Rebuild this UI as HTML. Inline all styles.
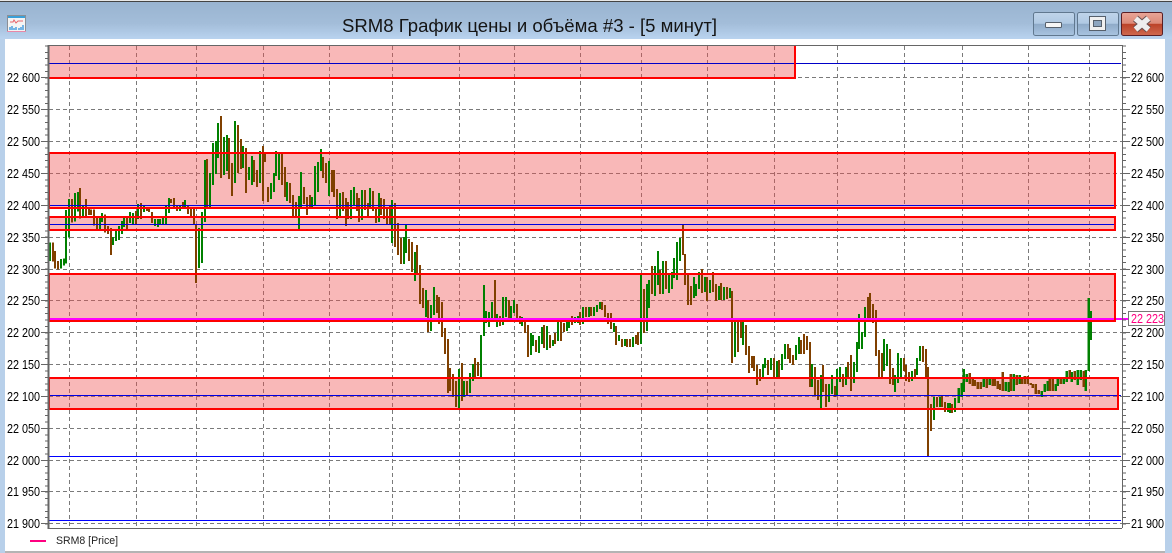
<!DOCTYPE html>
<html><head><meta charset="utf-8"><style>
html,body{margin:0;padding:0;width:1172px;height:553px;overflow:hidden;background:#b8d0ea}
svg{position:absolute;left:0;top:0;display:block}
text{font-family:"Liberation Sans",sans-serif}
</style></head><body>
<svg width="1172" height="553" viewBox="0 0 1172 553" xmlns="http://www.w3.org/2000/svg">
<defs>
<linearGradient id="tb" x1="0" y1="0" x2="0" y2="1"><stop offset="0" stop-color="#98b3d0"/><stop offset=".6" stop-color="#a3bdd9"/><stop offset="1" stop-color="#b9d3ef"/></linearGradient>
<linearGradient id="bb" x1="0" y1="0" x2="0" y2="1"><stop offset="0" stop-color="#bfd4ea"/><stop offset=".48" stop-color="#b0c9e3"/><stop offset=".5" stop-color="#8eaac8"/><stop offset="1" stop-color="#a9c4e0"/></linearGradient>
<linearGradient id="cb" x1="0" y1="0" x2="0" y2="1"><stop offset="0" stop-color="#e9a597"/><stop offset=".48" stop-color="#dc8a78"/><stop offset=".5" stop-color="#bb4228"/><stop offset="1" stop-color="#cf6a50"/></linearGradient>
</defs>
<rect width="1172" height="553" fill="#b8d0ea"/>
<rect width="1172" height="39" fill="url(#tb)"/>
<rect y="0" width="1172" height="1" fill="#e8e8e8"/>
<rect y="1" width="1172" height="1" fill="#444"/>
<rect x="5" y="39" width="1160" height="512" fill="#fff"/>
<rect x="5" y="551" width="1160" height="2" fill="#b4b4b4"/>

<!-- window icon -->
<rect x="7.5" y="15.5" width="18" height="16" fill="#f4f4f4" stroke="#8a8f96"/>
<rect x="8" y="16" width="17" height="2" fill="#3ba0d8"/>
<path d="M10 22h3l1-2 2 3 2-2h5" fill="none" stroke="#e8636a" stroke-width="1"/>
<path d="M10 30v-3M12 30v-4M14 30v-2M16 30v-3M19 30v-2M21 30v-3M23 30v-5" stroke="#4a9fe0" stroke-width="1.5" fill="none"/>
<rect x="7" y="31" width="19" height="1" fill="#e888a8"/>

<!-- title -->
<text x="342" y="32" font-size="18" fill="#141414" textLength="375" lengthAdjust="spacingAndGlyphs">SRM8 График цены и объёма #3 - [5 минут]</text>

<!-- buttons -->
<rect x="1033.5" y="12.5" width="41" height="23" rx="2" fill="url(#bb)" stroke="#60788f"/>
<rect x="1045.5" y="22.5" width="16" height="5" rx="1" fill="#f6f6f6" stroke="#56606c"/>
<rect x="1077.5" y="12.5" width="41" height="23" rx="2" fill="url(#bb)" stroke="#60788f"/>
<rect x="1089.5" y="16.5" width="16" height="14" fill="#f0f0f0" stroke="#56606c"/>
<rect x="1093.5" y="20.5" width="8" height="6" fill="#8ea6c0" stroke="#56606c"/>
<rect x="1121.5" y="12.5" width="41" height="23" rx="2" fill="url(#cb)" stroke="#5a1f25"/>
<path d="M1135.5 18.5l13 11M1148.5 18.5l-13 11" fill="none" stroke="#6a5050" stroke-width="7.5"/>
<path d="M1135.5 18.5l13 11M1148.5 18.5l-13 11" fill="none" stroke="#eeeeee" stroke-width="5.5"/>

<!-- grid -->
<g fill="none" stroke="#7a7a7a" stroke-width="1" stroke-dasharray="4 3" shape-rendering="crispEdges">
<path d="M49 77.5H1122M49 109.5H1122M49 141.5H1122M49 173.5H1122M49 205.5H1122M49 237.5H1122M49 269.5H1122M49 300.5H1122M49 332.5H1122M49 364.5H1122M49 396.5H1122M49 428.5H1122M49 460.5H1122M49 491.5H1122M49 523.5H1122"/>
<path d="M69.5 46V528M136.5 46V528M196.5 46V528M263.5 46V528M329.5 46V528M392.5 46V528M459.5 46V528M514.5 46V528M580.5 46V528M641.5 46V528M707.5 46V528M774.5 46V528M837.5 46V528M904.5 46V528M962.5 46V528M1028.5 46V528M1089.5 46V528"/>
</g>

<!-- zones fill -->
<g fill="#f04e4e" fill-opacity=".4" shape-rendering="crispEdges">
<rect x="49" y="46" width="746" height="32"/>
<rect x="49" y="153" width="1066" height="55"/>
<rect x="49" y="217" width="1066" height="13"/>
<rect x="49" y="274" width="1066" height="47"/>
<rect x="49" y="378" width="1069" height="31"/>
</g>

<!-- bars -->
<g fill="none" stroke-width="7" shape-rendering="crispEdges">
<g transform="translate(40 110) scale(.33333)">
<path stroke="#008000" d="M30 397V453M63 447V476M72 445V467M78 300V461M87 267V383M105 249V335M114 246V305M129 288V320M180 321V357M186 309V336M219 381V405M228 363V393M237 348V390M246 333V372M252 324V351M270 306V339M279 309V342M294 282V327M312 288V306M345 327V348M354 327V351M360 327V345M369 324V342M378 288V342M387 264V309M420 288V303M435 270V294M477 354V474M486 306V459M495 150V336M510 189V294M519 99V225M528 93V192M534 39V144M552 81V195M561 75V183"/>
<path stroke="#804000" d="M39 397V455M45 423V475M54 453V479M96 267V338M120 234V326M138 267V320M147 292V315M153 298V315M162 298V347M171 321V357M195 313V368M204 348V372M213 354V435M261 324V357M288 303V342M303 279V327M321 294V303M327 291V306M336 306V339M393 267V279M402 264V294M411 288V303M429 276V294M444 288V312M453 291V318M462 297V345M468 345V519M501 147V296M543 18V204M567 84V207"/>
</g>
<g transform="translate(230 110) scale(.33333)">
<path stroke="#008000" d="M15 33V219M39 108V174M57 171V210M66 138V225M90 123V219M123 219V267M132 189V246M138 123V198M147 132V210M171 216V273M207 258V357M213 186V294M246 261V294M255 168V285M264 156V246M273 117V183M297 153V258M330 249V318M363 240V327M372 231V285M396 240V330M420 234V297M447 249V336M486 270V399M522 381V462M528 345V429M555 426V513"/>
<path stroke="#804000" d="M6 159V258M24 45V189M33 87V177M48 114V249M72 150V216M81 180V231M99 108V273M105 129V156M114 231V276M156 129V225M165 171V261M180 219V279M189 255V318M198 276V318M222 231V282M231 261V315M240 255V294M279 141V204M288 159V219M306 180V246M312 180V261M321 237V327M339 246V303M348 264V348M354 276V327M381 249V303M387 264V336M405 240V300M414 279V318M429 243V303M438 291V339M453 264V315M462 267V327M471 291V342M480 288V342M495 279V411M504 339V435M513 384V462M537 387V453M546 396V486M561 405V492M570 465V540"/>
</g>
<g transform="translate(390 220) scale(.33333)">
<path stroke="#008000" d="M108 210V291M123 255V333M132 201V285M207 447V564M222 483V531M240 459V519M249 432V483M273 345V471M282 195V348M288 273V309M297 276V321M306 246V303M321 282V321M339 231V315M348 231V291M363 258V294M372 240V279M396 291V318M423 339V405M429 345V378M447 348V399M456 321V372M471 318V390M489 360V378M504 306V363M531 294V333M537 303V324M555 291V309M564 288V309"/>
<path stroke="#804000" d="M90 135V252M99 204V264M114 240V336M141 225V279M147 231V312M156 246V351M165 324V402M174 357V519M180 444V513M189 462V531M198 483V561M216 429V543M231 483V525M255 414V471M264 426V468M315 180V300M330 288V318M357 240V297M381 252V300M390 288V312M405 297V339M414 315V411M438 360V396M462 315V384M480 345V384M495 339V372M513 303V363M522 309V336M546 288V315"/>
</g>
<g transform="translate(580 220) scale(.33333)">
<path stroke="#008000" d="M9 261V312M27 261V291M42 261V288M51 255V276M60 246V267M102 309V336M117 345V363M135 357V378M159 351V381M183 165V372M201 192V333M207 180V264M225 138V228M234 93V195M249 123V222M267 162V219M276 156V207M282 114V174M291 66V180M300 54V123M342 171V234M348 192V228M357 156V207M375 171V216M390 180V219M417 198V240M432 201V240M450 204V234M465 306V411M489 306V375M549 432V471M555 414V444M573 414V450M591 423V471"/>
<path stroke="#804000" d="M0 276V315M18 261V291M33 261V288M66 246V270M75 255V291M84 279V312M93 279V327M108 318V375M126 357V381M141 357V381M150 357V381M168 345V372M174 336V375M192 207V339M216 138V222M240 150V222M258 123V207M309 15V105M315 102V195M324 165V255M333 198V255M366 147V219M381 171V243M399 156V216M408 192V243M423 189V240M441 201V237M456 213V429M474 294V396M483 297V354M498 315V405M507 378V459M516 408V444M522 408V453M531 435V495M540 447V483M564 420V465M582 414V471M597 420V471"/>
</g>
<g transform="translate(750 280) scale(.33333)">
<path stroke="#008000" d="M96 222V270M105 192V237M138 195V240M147 171V222M186 252V321M213 285V384M237 312V366M246 285V342M261 267V348M270 261V306M288 261V315M312 246V309M321 186V276M327 102V207M336 156V207M345 81V171M402 177V273M411 192V258M435 285V336M444 219V309M453 234V291M486 273V303M501 234V285M510 198V243M552 351V420M570 351V381M594 369V396"/>
<path stroke="#804000" d="M114 192V237M120 204V249M129 225V255M153 180V222M162 162V222M171 168V210M180 186V321M195 261V345M204 300V360M219 255V336M228 312V381M255 318V351M279 282V321M294 246V291M303 225V333M354 51V117M360 39V117M369 72V129M378 90V228M387 210V291M396 219V291M420 207V312M429 264V315M462 234V273M468 255V303M477 276V306M495 267V291M519 198V246M528 207V291M534 261V528M543 372V453M561 351V381M576 348V381M585 366V396"/>
</g>
<g transform="translate(920 280) scale(.33333)">
<path stroke="#008000" d="M90 369V399M105 354V396M116 324V369M125 309V351M131 267V336M140 282V306M191 297V321M209 294V315M257 306V333M266 306V336M281 282V333M299 285V312M365 333V351M374 312V336M383 303V333M407 312V333M413 297V318M431 297V312M440 273V306M455 276V306M473 270V315M482 270V300M497 270V333M506 54V273M512 93V180"/>
<path stroke="#804000" d="M96 372V399M149 279V312M158 297V318M164 300V318M173 306V327M182 306V327M200 294V324M218 297V318M224 297V318M233 303V327M240 312V330M248 276V333M272 282V333M290 285V315M305 291V312M314 288V312M323 288V312M332 309V315M338 312V324M347 312V342M356 330V342M389 297V333M398 297V333M422 297V312M449 270V291M464 273V300M491 273V321"/>
</g>
</g>

<!-- lines -->
<g shape-rendering="crispEdges" fill="none">
<path stroke="#0000c8" d="M49 63.5H1121"/>
<path stroke="#0000e0" d="M49 205.5H1115M49 224.5H1115M49 395.5H1121"/>
<path stroke="#0000ff" d="M49 456.5H1121M49 520.5H1121"/>
<path stroke="#ff00ff" stroke-width="2" d="M49 319H1128"/>
<g stroke="#ff0000" stroke-width="2">
<path d="M49 78H795V45"/>
<rect x="49" y="153" width="1066" height="55"/>
<rect x="49" y="217" width="1066" height="13"/>
<rect x="49" y="274" width="1066" height="47"/>
<rect x="49" y="378" width="1069" height="31"/>
</g>
</g>

<!-- frame and ticks -->
<g shape-rendering="crispEdges" fill="none" stroke="#666">
<path stroke-width="2" d="M48.5 45V529"/>
<path d="M48 45.5H1122.5V528M48 528.5H1122"/>
<path stroke-width="3" stroke-dasharray="1 5.375" stroke-dashoffset="5.95" d="M46.5 45V528"/>
<path stroke-width="3" stroke-dasharray="1 5.375" stroke-dashoffset="5.95" d="M1124.5 45V528"/>
<path d="M41 77.5H48M41 109.5H48M41 141.5H48M41 173.5H48M41 205.5H48M41 237.5H48M41 269.5H48M41 300.5H48M41 332.5H48M41 364.5H48M41 396.5H48M41 428.5H48M41 460.5H48M41 491.5H48M41 523.5H48"/>
<path d="M1122 77.5H1130M1122 109.5H1130M1122 141.5H1130M1122 173.5H1130M1122 205.5H1130M1122 237.5H1130M1122 269.5H1130M1122 300.5H1130M1122 332.5H1130M1122 364.5H1130M1122 396.5H1130M1122 428.5H1130M1122 460.5H1130M1122 491.5H1130M1122 523.5H1130"/>
</g>

<!-- axis labels -->
<g font-size="13" fill="#000">
<text x="7" y="82" textLength="33" lengthAdjust="spacingAndGlyphs">22 600</text>
<text x="7" y="114" textLength="33" lengthAdjust="spacingAndGlyphs">22 550</text>
<text x="7" y="146" textLength="33" lengthAdjust="spacingAndGlyphs">22 500</text>
<text x="7" y="178" textLength="33" lengthAdjust="spacingAndGlyphs">22 450</text>
<text x="7" y="210" textLength="33" lengthAdjust="spacingAndGlyphs">22 400</text>
<text x="7" y="242" textLength="33" lengthAdjust="spacingAndGlyphs">22 350</text>
<text x="7" y="274" textLength="33" lengthAdjust="spacingAndGlyphs">22 300</text>
<text x="7" y="305" textLength="33" lengthAdjust="spacingAndGlyphs">22 250</text>
<text x="7" y="337" textLength="33" lengthAdjust="spacingAndGlyphs">22 200</text>
<text x="7" y="369" textLength="33" lengthAdjust="spacingAndGlyphs">22 150</text>
<text x="7" y="401" textLength="33" lengthAdjust="spacingAndGlyphs">22 100</text>
<text x="7" y="433" textLength="33" lengthAdjust="spacingAndGlyphs">22 050</text>
<text x="7" y="465" textLength="33" lengthAdjust="spacingAndGlyphs">22 000</text>
<text x="7" y="496" textLength="33" lengthAdjust="spacingAndGlyphs">21 950</text>
<text x="7" y="528" textLength="33" lengthAdjust="spacingAndGlyphs">21 900</text>
<text x="1131" y="82" textLength="33" lengthAdjust="spacingAndGlyphs">22 600</text>
<text x="1131" y="114" textLength="33" lengthAdjust="spacingAndGlyphs">22 550</text>
<text x="1131" y="146" textLength="33" lengthAdjust="spacingAndGlyphs">22 500</text>
<text x="1131" y="178" textLength="33" lengthAdjust="spacingAndGlyphs">22 450</text>
<text x="1131" y="210" textLength="33" lengthAdjust="spacingAndGlyphs">22 400</text>
<text x="1131" y="242" textLength="33" lengthAdjust="spacingAndGlyphs">22 350</text>
<text x="1131" y="274" textLength="33" lengthAdjust="spacingAndGlyphs">22 300</text>
<text x="1131" y="305" textLength="33" lengthAdjust="spacingAndGlyphs">22 250</text>
<text x="1131" y="337" textLength="33" lengthAdjust="spacingAndGlyphs">22 200</text>
<text x="1131" y="369" textLength="33" lengthAdjust="spacingAndGlyphs">22 150</text>
<text x="1131" y="401" textLength="33" lengthAdjust="spacingAndGlyphs">22 100</text>
<text x="1131" y="433" textLength="33" lengthAdjust="spacingAndGlyphs">22 050</text>
<text x="1131" y="465" textLength="33" lengthAdjust="spacingAndGlyphs">22 000</text>
<text x="1131" y="496" textLength="33" lengthAdjust="spacingAndGlyphs">21 950</text>
<text x="1131" y="528" textLength="33" lengthAdjust="spacingAndGlyphs">21 900</text>
</g>

<!-- price label -->
<rect x="1128.5" y="311.5" width="36" height="14" fill="#fff" stroke="#777" shape-rendering="crispEdges"/>
<text x="1131" y="323" font-size="13" fill="#ff0080" textLength="33" lengthAdjust="spacingAndGlyphs">22 223</text>

<!-- legend -->
<rect x="30" y="540" width="16" height="2" fill="#ff0080"/>
<text x="56" y="544" font-size="11" fill="#222" textLength="62" lengthAdjust="spacingAndGlyphs">SRM8 [Price]</text>
</svg>
</body></html>
